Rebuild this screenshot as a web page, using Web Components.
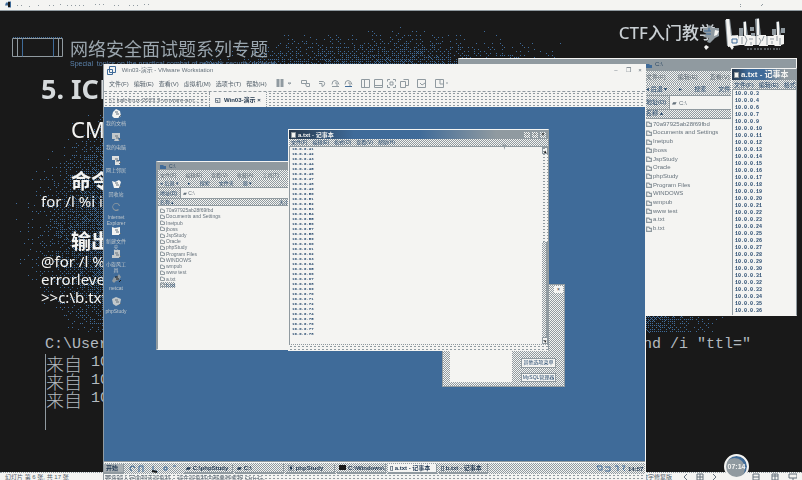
<!DOCTYPE html>
<html lang="zh-CN">
<head>
<meta charset="utf-8">
<title>网络安全面试题系列专题</title>
<style>
:root{--ink:#191919;--paper:#f4f4f2;--grey:#909aa0;--blue:#3f6b99;--dim:#66727c;
--check:repeating-conic-gradient(#909aa0 0 25%,#f4f4f2 0 50%) 0 0/2px 2px;
--sans:"Liberation Sans","Noto Sans CJK SC",sans-serif;
--dots:radial-gradient(circle,#909aa0 0 .6px,transparent .7px) 0 0/4px 3px}
body{margin:0;background:var(--ink);font-family:var(--sans)}
</style>
</head>
<body>
<lesson-screen></lesson-screen>
<script>
const define=(name,html,setup)=>{
  const t=document.createElement('template');
  t.innerHTML='<style>*{box-sizing:border-box}button,input{font:inherit;color:inherit;background:none;border:0;padding:0;margin:0;min-width:0}</style>'+html;
  customElements.define(name,class extends HTMLElement{
    constructor(){super();this.attachShadow({mode:'open'}).append(t.content.cloneNode(true));}
    connectedCallback(){if(setup)setup(this,this.shadowRoot);}
  });
};

/* Dithered glow behind the slide content */
define('dither-glow',`<style>:host{display:block}canvas{display:block;width:100%;height:100%}</style><canvas></canvas>`,(el,root)=>{
  const c=root.querySelector('canvas');
  const m=[[0,32,8,40,2,34,10,42],[48,16,56,24,50,18,58,26],[12,44,4,36,14,46,6,38],[60,28,52,20,62,30,54,22],[3,35,11,43,1,33,9,41],[51,19,59,27,49,17,57,25],[15,47,7,39,13,45,5,37],[63,31,55,23,61,29,53,21]];
  const draw=()=>{
    const w=c.width=el.clientWidth,h=c.height=el.clientHeight,g=c.getContext('2d');
    g.fillStyle='#3f6b99';
    let s=7;
    for(let y=0;y<h;y++)for(let x=0;x<w;x++){
      s=(s*16807)%2147483647;
      const d=Math.hypot((x-w*.49)/(w*.48),(y-h*.69)/(h*.66));
      const v=Math.min(.38,(1-d)*1.6);
      const n=(m[y&7][x&7]+.5)/64*.75+s/2147483647*.25;
      if(v>0&&v>n)g.fillRect(x,y,1,1);
    }
  };
  draw();new ResizeObserver(draw).observe(el);
});

define('bili-logo',`<style>:host{display:block;width:84px;height:34px}svg{display:block}</style>
<svg width="84" height="34" viewBox="0 0 84 34" aria-hidden="true">
<g fill="#909aa0"><path d="M2 12h4l3-3 2 3h7v8l-4 2-5 5-3-1 2-4-6-1 4-3-4-2zM24 4l5-1 2 16 7 1v9l-12 1zM42 6l3-1 2 15h-4zM54 3l4-1 2 18h-5zM75 6l3-1 2 15h-4z"/><path d="M38 12h4v8h-4zM49 11h4v4h-4zM71 13h4v6h-4zM80 12h4v5h-4zM50 17h4v4h-4z"/></g>
<g fill="#f4f4f2"><path d="M25 3h3l2 17 7-1 2 10-12 2zM43 6h2v13h-2zM56 3h2v16h-2zM76 6h2v13h-2zM14 14l4 1-2 4-3 1zM5 29l3 2-3 3-2-3zM30 29l3 2-2 3-2-3z"/><path d="M38 20h5l1-1h6v1h7l1-1h7v1h7l1-1h10v9l-3 1v1h-6l-1-1h-6v1h-9v-1h-6v1h-8l-1-1h-5z"/></g>
<g stroke="#3f6b99" fill="none" stroke-width="1"><path d="M31 23h5v4h-5zM3 15h7M5 18h5M8 12v3"/></g>
<path d="M41 21v7M44 20l2 4-2 5M48 23h4M50 26v3M55 20v9M58 22l2 3-2 4M63 20l-2 5M66 20v9M69 23h4M71 25v3M76 20v5M79 22v7" stroke="#909aa0" fill="none"/>
<path d="M46 33h5m2 0h8m2 0h7m2 0h7" stroke="#909aa0" stroke-dasharray="2 1"/></svg>`);

define('slide-page',`<style>
:host{display:grid;overflow:hidden;position:relative;align-content:start;background:var(--ink);color:var(--paper)}
dither-glow{position:absolute;left:0;right:0;top:0;height:322px}
header,.body,.term{position:relative}
header{display:flex;height:59px;padding:10px 0 0 12px}
.mark{flex:none;margin-top:16px}
.t{margin:15px 0 0 7px;flex:1;color:#9aa5ad}
h1{font:400 18px/24px "Noto Sans CJK SC",sans-serif;margin:0}
.t p{margin:0;font:7px/8px var(--sans);color:#5b82ab}
h2{font:500 17px/24px "Noto Sans","Noto Sans CJK SC",sans-serif;margin:0;color:#c9cfd3}
bili-logo{margin-right:17px;margin-left:-15px;margin-top:-5px}
.body{padding-left:41px;font:15px/18px "Noto Sans","Noto Sans CJK SC",sans-serif}
h3{font:700 27px/38px "Noto Sans",sans-serif;margin:0;color:#d6dadc}
p{margin:0}.cmd{font-size:22px;line-height:42px;padding-left:30px}
h4{font:700 20px/22px "Noto Sans CJK SC",sans-serif;margin:20px 0 0;padding-left:30px}
.term{margin:30px 51px 0 45px;font:15px/18px "Liberation Mono","Noto Sans CJK SC",monospace;color:#b3bac0}
.term .l{display:flex;justify-content:space-between}
.rep{border-left:1px solid var(--grey);min-height:76px}
.rep div{display:flex;gap:9px;height:18px}
.rep b{font:300 18px/18px "Noto Sans CJK SC",sans-serif}
</style>
<dither-glow></dither-glow>
<header>
<svg class="mark" width="51" height="21" viewBox="0 0 51 21" fill="none" stroke="#909aa0" aria-hidden="true"><path d="M.5 1.5h50v18H.5zM5.5 1.5v18M46.500 1.500v18"/><path d="M10.500 1.500v18M41.500 1.500v18" stroke="#3f6b99" stroke-width="1"/><path d="M1 .5h50" stroke="#3f6b99" stroke-dasharray="1 1"/></svg>
<div class="t"><h1>网络安全面试题系列专题</h1><p>Special &nbsp;topics on the practical combat of network security projects</p></div>
<h2>CTF入门教学</h2><bili-logo></bili-logo>
</header>
<div class="body"><h3>5. ICMP</h3><p class="cmd">CMD</p>
<h4>命令</h4><p>for /l %i in</p>
<h4>输出</h4><p>@for /l %i</p><p>errorlevel</p><p>&gt;&gt;c:\\b.txt</p></div>
<div class="term"><div class="l"><span>C:\\Users</span><span>find /i "ttl="</span></div>
<div class="rep"><div><b>来自</b><span>10</span></div><div><b>来自</b><span>10</span></div><div><b>来自</b><span>10</span></div></div></div>`);

define('note-pad',`<style>
:host{display:flex;flex-direction:column;border:1px solid var(--paper);border-right-color:var(--grey);background:var(--paper);overflow:hidden;font:var(--fs,5px)/1 var(--sans)}
.bar{display:flex;align-items:center;gap:2px;height:var(--th,9px);flex:none;padding:0 2px;color:var(--paper);background:linear-gradient(90deg,#26384c,#3f6b99 25% 50%,#909aa0 80%);font-size:var(--ts,6px);font-weight:700}
.bar span{flex:1;white-space:nowrap}
.bar button{width:6px;height:6px;background:var(--check);color:var(--ink);font-size:5px;line-height:5px}
nav{display:flex;gap:5px;align-items:center;height:var(--mh,8px);flex:none;background:var(--check);border-bottom:1px solid var(--grey);padding-left:2px;color:#2b4d70;white-space:nowrap;overflow:hidden}
.main{flex:1;display:flex;min-height:0}
.rows{flex:1;margin:0;padding:var(--rp,0) 2px;font:700 var(--rs,4px)/var(--rh,5px) "Liberation Mono",monospace;color:#24476c;overflow:hidden;border-left:1px solid var(--grey)}
.rows div{height:var(--rh,5px)}
.sb{width:6px;flex:none;display:flex;flex-direction:column;background:var(--dots)}
.sb button{height:7px;font-size:5px;line-height:6px;color:var(--ink);border:1px solid var(--grey)}
.sb i{flex:1;margin-top:88px;background:var(--check);border-right:2px solid var(--grey)}
footer{height:6px;flex:none;border-top:1px dotted var(--grey);background:var(--dots)}
:host([plain]) .sb,:host([plain]) footer,:host([plain]) .bar button{display:none}
</style>
<div class="bar"><svg width="5" height="6" aria-hidden="true"><path d="M.5.500h4v5h-4z" fill="#f4f4f2" stroke="#909aa0"/></svg><span><slot></slot></span><button aria-label="最小化">-</button><button aria-label="最大化">▫</button><button aria-label="关闭">×</button></div>
<nav><span>文件(F)</span><span>编辑(E)</span><span>格式(O)</span><span>查看(V)</span><span>帮助(H)</span></nav>
<div class="main"><div class="rows"></div><div class="sb"><button aria-label="上">▴</button><i></i><button aria-label="下">▾</button></div></div><footer></footer>`,
(el,root)=>{
  const [a,b]=el.getAttribute('range').split('-').map(Number);
  const list=(el.getAttribute('lead')||'').split(',').filter(Boolean).map(Number);
  for(let i=a;i<=b;i++)list.push(i);
  root.querySelector('.rows').replaceChildren(...list.map(n=>{const d=document.createElement('div');d.textContent='10.0.0.'+n;return d;}));
});

define('file-explorer',`<style>
:host{display:flex;flex-direction:column;border:1px solid var(--paper);border-left:2px solid var(--grey);background:var(--paper);overflow:hidden;font:var(--fs,5px)/1.2 var(--sans);color:var(--dim);white-space:nowrap}
.bar,nav,.tools,.addr,.head{display:flex;align-items:center;gap:var(--gap,9px);flex:none;overflow:hidden;padding-left:var(--pad,2px)}
.bar{height:var(--h1,8px);background:var(--grey);color:#2c4965;gap:3px}
nav{height:var(--h2,9px);background:var(--check)}
.tools{height:var(--h3,9px);background:var(--check);color:#2b4d70;border-bottom:1px solid var(--grey)}
.addr{height:var(--h4,10px);gap:3px;color:#2b4d70;background:var(--check)}
.addr input{flex:1;height:100%;background:var(--paper);color:var(--dim);padding-left:2px;border-left:1px solid var(--grey)}
.head{height:var(--h5,8px);background:var(--check);border:1px solid var(--grey);border-width:1px 0;color:#2b4d70;justify-content:space-between}
ul{list-style:none;margin:0;padding:1px 2px 0 var(--pad,2px);height:var(--lh,82px);display:grid;grid-auto-rows:1fr;align-items:center}
li{display:flex;gap:1px;align-items:center}
li svg{width:var(--fs,5px);height:var(--fs,5px);flex:none}
.sel{background:var(--check);justify-self:start;color:#2b4d70}
</style>
<div class="bar"><svg width="6" height="5" aria-hidden="true"><path d="M0 1h3l1 1h2v3H0z" fill="#3f6b99"/></svg><span>C:\\</span></div>
<nav><span>文件(F)</span><span>编辑(E)</span><span>查看(V)</span><span>收藏(A)</span><span>工具(T)</span></nav>
<div class="tools"><span>◂ 后退 ▾</span><span>▸</span><span>搜索</span><span>文件夹</span><span>▦ ▾</span></div>
<div class="addr"><label for="a">地址(D)</label><input id="a" value="▰ C:\\"></div>
<div class="head"><span>名称 ▴</span><span>大小</span></div>
<ul></ul>`,(el,root)=>{
  const sel=el.getAttribute('selected');
  root.querySelector('ul').innerHTML=['70a97925ab28f69fbd','Documents and Settings','Inetpub','jboss','JspStudy','Oracle','phpStudy','Program Files','WINDOWS','wmpub','www test','a.txt','b.txt'].map(n=>
   `<li${n===sel?' class="sel"':''}><svg viewBox="0 0 5 5" aria-hidden="true"><path d="M.500 1h2l.500 1h1.500v2.500h-4z" fill="none" stroke="#909aa0"/></svg>${n}</li>`).join('');
});

define('study-dialog',`<style>
:host{display:grid;grid-template-rows:9px 1fr 36px;background:var(--check);border:1px solid var(--grey);font:5px/7px var(--sans);color:#24476c}
.x{justify-self:end;margin:1px;width:9px;background:var(--paper);color:var(--ink)}
.row{display:grid;grid-template-columns:62px 1fr;padding:0 8px 4px 7px;gap:9px}
.box{background:var(--paper)}.b{display:grid;gap:5px;padding:8px 0 0}
.b button{border:1px solid var(--grey);background:var(--paper);white-space:nowrap;overflow:hidden}
</style><button class="x" aria-label="关闭">×</button><i></i><div class="row"><div class="box"></div><div class="b"><button>其他选项菜单</button><button>MySQL管理器</button></div></div>`);

define('desktop-icons',`<style>
:host{display:grid;height:212px;width:24px;grid-template-columns:24px;grid-auto-rows:1fr;font:5px/6px var(--sans);color:#c2c8cb;text-align:center}
div{display:flex;flex-direction:column;align-items:center;gap:1px;overflow:visible;height:20px}
svg{flex:none}
span{width:22px;white-space:normal}
</style>`,(el,root)=>{
  const icons=[
   ['我的文档','M2 4l3-3 4 2 1 5-3 2H3L1 8z','#f4f4f2'],['我的电脑','M1 1h8v5H7l1 3H3l1-2H1z','#c2c8cb'],['网上邻居','M1 1h7v4H6v1h3v4H4V5H1z','#dfe1e1'],
   ['回收站','M1 2l3 1 4-2 2 2-2 6H3z','#f4f4f2'],['Internet Explorer','M5 1a4 4 0 1 0 3 7L7 7a3 3 0 1 1 1-3h1a4 4 0 0 0-4-3z','#909aa0'],['新建文件夹','M1 1l3 1 5-1v8H1z','#f4f4f2'],
   ['小旋风工具','M3 1h6v8H1V6h2z','#c2c8cb'],['netcat','M1 8l2-4 2 1 3-4 2 3-2 3-3 1-2 2z','#909aa0'],['phpStudy','M1 3l4-2 5 2-1 5-4 2-3-2z','#c2c8cb']];
  root.querySelectorAll('div').forEach(d=>d.remove());
  for(const [n,p,f] of icons){const d=document.createElement('div');
   d.innerHTML=`<svg width="11" height="11" aria-hidden="true"><path d="${p}" fill="${f}"/>${n.startsWith('Int')?'':`<path d="M4 4h3M5 6h3M8 9l2-2" stroke="${n==='netcat'?'#191919':'#66727c'}"/>`}</svg><span>${n}</span>`;root.append(d);}
});

define('vm-window',`<style>
:host{display:flex;flex-direction:column;background:var(--paper);border-left:1px solid var(--grey);border-right:1px dashed var(--paper);overflow:hidden;font:6px/8px var(--sans);color:var(--dim);white-space:nowrap}
.title{display:flex;align-items:center;height:12px;padding:0 1px 0 3px;gap:4px;flex:none}
.title span{flex:1}
.title button{width:8px;text-align:center}
.menu{display:flex;align-items:center;height:16px;gap:5px;padding-left:5px;border-bottom:1px dashed var(--grey);flex:none;color:#55616b}
.menu svg{flex:none}
.tabs{display:flex;align-items:center;height:15px;flex:none;background:var(--dots)}
.tabs button{height:100%;padding:0 5px;border-right:1px dotted var(--grey);display:flex;align-items:center;gap:3px}
.tabs .on{background:var(--paper);color:#23384e;font-weight:700}
.desk{flex:1;min-height:0;background:var(--blue);padding:1px 0}
.task{display:flex;align-items:center;height:12px;flex:none;background:var(--check);border-top:1px solid var(--paper);box-shadow:0 -1px var(--grey);gap:2px;color:#1d3550;font-size:6px}
.task button{height:10px;width:49px;text-align:left;overflow:hidden;border:1px solid var(--grey);border-width:0 1px 2px 0;display:flex;align-items:center;gap:2px;font-weight:700;padding-left:2px}
.task .on{background:var(--paper)}
.task .start{width:20px;background:#a9b0b4}
.task .gap{flex:1}.task svg{flex:none}
.stat{height:6px;flex:none;overflow:hidden;background:var(--dots);padding-left:1px}
</style>
<div class="title"><svg width="9" height="9" fill="none" stroke="#3f6b99" aria-hidden="true"><path d="M2.500.500h6v6h-6zM.500 3.500h5v5h-5z"/></svg><span>&nbsp;Win03-演示 - VMware Workstation</span><button aria-label="最小化">–</button><button aria-label="最大化">❐</button><button aria-label="关闭">×</button></div>
<div class="menu"><button>文件(F)</button><button>编辑(E)</button><button>查看(V)</button><button>虚拟机(M)</button><button>选项卡(T)</button><button>帮助(H)</button>
<svg width="176" height="11" viewBox="0 0 176 11" fill="none" stroke="#909aa0" aria-hidden="true"><path d="M6 1v8M10 1v8" stroke-width="3"/><path d="M16 5h3l-1.500 1zM29.500 2.500h5v3h-5zM33.500 5.500h4v3h-3zM47 3.500h3q4 0 2 4l-2 1v-3h-3M60 6.500q0-4 3-4t4 4M60 8.500h7M63 5h2v3M73 6.500q0-4 3-4t4 4M76 5h2v3M89.500 1.500h8v8h-8zM92.500 1.500v8M102.500 1.500h8v8h-8zM102.500 7.500h8M118 1.500h-2.500v2M121 1.500h2.500v2M115.500 7v2.500h2.500M121 9.500h2.500v-2.500M118 4h3v3h-3zM128.500 3.500h5v6h-5zM131.500 1.500h5v6h-3M145.500 1.500h8v8h-8zM148 5l2 2 3-2M163.500 1.500h8v8h-8zM168 2v4h3M174 5h2"/><path d="M73 8.500h7" stroke="#3f6b99"/></svg></div>
<div class="tabs"><button>◱ kali-linux-2023.3-vmware-am... ×</button><button class="on"><span>◱</span> Win03-演示 ×</button></div>
<div class="desk"><desktop-icons></desktop-icons></div>
<div class="task"><button class="start">开始</button>
<svg width="56" height="10" fill="none" stroke="#3f6b99" aria-hidden="true"><path d="M6 7a2.500 2.500 0 1 1 3-3M13 8V2h4v6M27 2v5h3l2 1" /><path d="M26 7l5 1" stroke="#191919" stroke-width="2"/><path d="M38 3h3v3h-3zM47 2h3"/></svg>
<button>▰ C:\\phpStudy</button><button>▰ C:\\</button><button>▣ phpStudy</button><button><svg width="7" height="5" aria-hidden="true"><path d="M0 0h7v5H0z" fill="#191919"/></svg>C:\\Windows\\...</button><button class="on">▯ a.txt - 记事本</button><button>▯ b.txt - 记事本</button>
<span class="gap"></span><svg width="30" height="9" fill="none" stroke="#3f6b99" aria-hidden="true"><path d="M1 2h5v4H3zM9 3h5v4H9M19 2h3v5M26 2h3l-2 3 2 2"/></svg><b>14:57&nbsp;</b></div>
<div class="stat">要将输入定向到该虚拟机，请在虚拟机内部单击或按 Ctrl+G。</div>`);

define('lesson-screen',`<style>
:host{display:grid;grid-template-rows:11px 1fr 8px;height:100vh;overflow:hidden;position:relative}
.top{background:var(--paper);border-bottom:1px solid var(--grey);display:flex;justify-content:space-between;padding:0 8px 0 5px}
.foot{background:var(--paper);border-top:1px dotted var(--grey);display:flex;justify-content:space-between;font:6px/8px var(--sans);color:#55616b;padding:0 5px;overflow:hidden}
.foot div{display:flex;gap:3px}
slide-page{min-height:0}
.w{position:absolute}
.ex2{left:458px;top:58px;width:339px;height:258px;--fs:6px;--h1:12px;--h2:13px;--h3:12px;--h4:13px;--h5:10px;--lh:114px;--pad:186px;--gap:12px}
.np2{left:731px;top:68px;width:66px;height:248px;--fs:6px;--ts:8px;--th:11px;--mh:10px;--rs:5px;--rh:7px;--rp:1px}
.vm{left:103px;top:64px;width:543px;bottom:0}
.ex{left:156px;top:161px;width:134px;height:189px}
.dlg{left:442px;top:284px;width:123px;height:103px}
.np{left:288px;top:129px;width:261px;height:222px}
.clock{left:724px;top:454px;width:25px;height:25px;border-radius:50%;background:var(--grey);border:2px solid var(--paper);box-shadow:inset -2px 2px var(--blue);color:var(--paper);font:700 7px/21px var(--sans);text-align:center}
.cur{left:502px;top:143px}
</style>
<div class="top"><svg width="166" height="10" aria-hidden="true"><path d="M1 2.500h2v-1h3v6H3v-2H0z" fill="#3f6b99"/><path d="M3 2h2v5H3z" fill="#191919"/><path d="M12 5.500h8m4 1h2m7-1h4m7 0h8m3-1h4m3 1h20m8-1h10m9 1h8m7 0h9m6-1h6" stroke="#909aa0" stroke-dasharray="1 3" fill="none"/></svg><svg width="60" height="10" fill="none" stroke="#909aa0" aria-hidden="true"><path d="M6.500 4v1M6.500 6v1M27 6l2-2"/></svg></div>
<slide-page></slide-page>
<div class="foot"><span>幻灯片 第 6 张, 共 17 张</span><div><span>数字修复版</span><svg width="122" height="8" fill="none" stroke="#66727c" aria-hidden="true"><path d="M12 1L9 4l3 3M22 1h6v6h-6zM22 4h6M25 1v6M38 1l3 3-3 3M78 1h6v6h-6zM78 4h6M97 1h6v6h-6zM97 3h6M100 1v6M114 1h8v4h-8zM118 5v3"/></svg></div></div>
<file-explorer class="w ex2"></file-explorer>
<note-pad class="w np2" plain lead="3,4,6,7,9" range="10-37">a.txt - 记事本</note-pad>
<vm-window class="w vm"></vm-window>
<file-explorer class="w ex" selected="b.txt"></file-explorer>
<study-dialog class="w dlg"></study-dialog>
<note-pad class="w np" range="41-78">a.txt - 记事本</note-pad>
<svg class="w cur" width="6" height="8" aria-hidden="true"><path d="M0 0l5 3-2 1v3z" fill="#909aa0"/></svg>
<div class="w clock">07:14</div>`);
</script>
</body>
</html>
